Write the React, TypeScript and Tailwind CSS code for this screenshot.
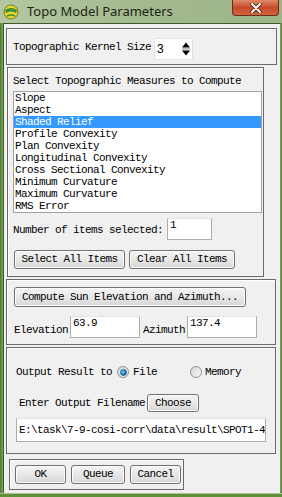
import React from 'react';

const mono = { fontFamily: '"Liberation Mono", "DejaVu Sans Mono", monospace' };

const measures = [
  'Slope',
  'Aspect',
  'Shaded Relief',
  'Profile Convexity',
  'Plan Convexity',
  'Longitudinal Convexity',
  'Cross Sectional Convexity',
  'Minimum Curvature',
  'Maximum Curvature',
  'RMS Error',
];

const Btn: React.FC<{ label: string; className?: string }> = ({ label, className }) => (
  <div
    className={`flex items-center justify-center rounded-[3px] border border-[#707070] bg-gradient-to-b from-[#f4f4f4] via-[#e8e8e8] to-[#d6d6d6] shadow-[inset_0_0_0_1px_#fcfcfc] text-[11px] tracking-[-0.6px] text-black ${className ?? ''}`}
  >
    {label}
  </div>
);

const Field: React.FC<{ value: string; className?: string }> = ({ value, className }) => (
  <div
    className={`border border-[#abadb3] border-t-[#e3e3e3] bg-white pl-[2px] leading-[12px] text-[11px] tracking-[-0.6px] text-black ${className ?? ''}`}
  >
    {value}
  </div>
);

const Radio: React.FC<{ on?: boolean }> = ({ on }) => (
  <div className="flex h-[12px] w-[12px] items-center justify-center rounded-full border border-[#8e8f8f] bg-gradient-to-br from-[#d4d4d4] to-[#f8f8f8]">
    {on && (
      <div className="h-[7px] w-[7px] rounded-full bg-[radial-gradient(circle_at_35%_35%,#6fd0ff,#0d6fb8_70%)] border border-[#1c5a8c]" />
    )}
  </div>
);

const Box: React.FC<{ className?: string; children: React.ReactNode }> = ({ className, children }) => (
  <div className={`border border-[#6a6a6a] shadow-[inset_1px_1px_0_#ffffff] ${className ?? ''}`}>{children}</div>
);

export default function App() {
  return (
    <div className="relative h-[497px] w-[282px] overflow-hidden bg-[#9cb486]" style={mono}>
      {/* title bar */}
      <div className="flex h-[23px] items-center bg-gradient-to-r from-[#b4c7a2] via-[#a3b98e] to-[#9db587]">
        <svg width="16" height="16" viewBox="0 0 16 16" className="ml-[3px] mt-[1px]">
          <circle cx="8" cy="8" r="7" fill="#e9d52a" stroke="#6f7d2a" strokeWidth="1" />
          <path d="M2 6 Q8 2 14 6 L13 9 Q8 6 3 9 Z" fill="#3c8f3a" />
          <path d="M4 12 Q8 10 12 12" stroke="#3c8f3a" strokeWidth="1.5" fill="none" />
        </svg>
        <span
          className="ml-[8px] text-[13px] text-[#1b2614]"
          style={{ fontFamily: '"Noto Sans", "Open Sans", sans-serif' }}
        >
          Topo Model Parameters
        </span>
        <div className="absolute right-[3px] top-0 flex h-[16px] w-[47px] items-center justify-center rounded-b-[4px] border border-t-0 border-[#6b2a1a] bg-gradient-to-b from-[#e08a6a] via-[#c8492a] to-[#d2643d]">
          <svg width="12" height="10" viewBox="0 0 12 10">
            <path d="M2 1 L10 9 M10 1 L2 9" stroke="#3a1a12" strokeWidth="3.4" strokeLinecap="round" />
            <path d="M2 1 L10 9 M10 1 L2 9" stroke="#ffffff" strokeWidth="2" strokeLinecap="round" />
          </svg>
        </div>
      </div>

      {/* client area */}
      <div className="ml-[3px] mr-[2px] h-[471px] border-l border-t border-[#3d5a2a] bg-[#f0f0f0] pl-[2px] pt-[4px] text-[11px] tracking-[-0.6px] text-black">
        {/* kernel size */}
        <Box className="flex h-[37px] w-[271px] items-center pl-[6px]">
          <span className="mt-[1px]">Topographic Kernel Size</span>
          <div className="relative ml-[3px] mt-[4px] h-[22px] w-[39px] border border-[#e3e3e3] bg-white">
            <span className="absolute left-[2px] top-[1px] text-[12px]" style={{ fontFamily: '"Liberation Sans", sans-serif' }}>3</span>
            <svg width="10" height="16" viewBox="0 0 10 16" className="absolute right-[1px] top-[2px]">
              <path d="M1 6.5 L5 1.5 L9 6.5 Z" fill="#000" />
              <path d="M1 9.5 L5 14.5 L9 9.5 Z" fill="#000" />
              <line x1="1" y1="8" x2="9" y2="8" stroke="#888" strokeWidth="1" />
            </svg>
          </div>
        </Box>

        {/* measures */}
        <Box className="mt-[2px] ml-[1px] flex h-[210px] w-[257px] flex-col pl-[5px] pt-[7px]">
          <div className="leading-[12px]">Select Topographic Measures to Compute</div>
          <div className="mt-[4px] h-[122px] w-[249px] border border-[#9ea2aa] bg-white">
            {measures.map((m) => (
              <div
                key={m}
                className={`h-[12px] pl-[1px] leading-[12px] ${m === 'Shaded Relief' ? 'bg-[#3399ff] text-white' : ''}`}
              >
                {m}
              </div>
            ))}
          </div>
          <div className="mt-[5px] flex items-center">
            <span className="mt-[2px]">Number of items selected:</span>
            <Field value="1" className="ml-[4px] h-[22px] w-[45px]" />
          </div>
          <div className="mt-[10px] flex gap-[4px] pl-[1px]">
            <Btn label="Select All Items" className="h-[19px] w-[111px]" />
            <Btn label="Clear All Items" className="h-[19px] w-[106px]" />
          </div>
        </Box>

        {/* sun */}
        <Box className="mt-[2px] flex h-[66px] w-[270px] flex-col pl-[7px] pt-[7px]">
          <Btn label="Compute Sun Elevation and Azimuth..." className="h-[20px] w-[232px]" />
          <div className="mt-[8px] flex items-center">
            <span className="mt-[7px]">Elevation</span>
            <Field value="63.9" className="ml-[2px] h-[22px] w-[70px]" />
            <span className="ml-[3px] mt-[7px]">Azimuth</span>
            <Field value="137.4" className="ml-[2px] h-[22px] w-[70px]" />
          </div>
        </Box>

        {/* output */}
        <Box className="mt-[2px] flex h-[107px] w-[270px] flex-col pl-[9px] pt-[17px]">
          <div className="flex h-[14px] items-center">
            <span>Output Result to</span>
            <div className="ml-[5px]"><Radio on /></div>
            <span className="ml-[4px]">File</span>
            <div className="ml-[33px]"><Radio /></div>
            <span className="ml-[3px]">Memory</span>
          </div>
          <div className="mt-[15px] flex items-center pl-[3px]">
            <span>Enter Output Filename</span>
            <Btn label="Choose" className="ml-[2px] h-[18px] w-[52px]" />
          </div>
          <Field
            value="E:\task\7-9-cosi-corr\data\result\SPOT1-4"
            className="mt-[6px] flex h-[24px] w-[250px] items-center overflow-hidden whitespace-nowrap"
          />
        </Box>

        {/* actions */}
        <Box className="ml-[3px] mt-[5px] flex h-[31px] w-[175px] items-center gap-[5px] pl-[5px]">
          <Btn label="OK" className="h-[19px] w-[51px]" />
          <Btn label="Queue" className="h-[19px] w-[54px]" />
          <Btn label="Cancel" className="h-[19px] w-[51px]" />
        </Box>
      </div>
      <div className="absolute bottom-0 left-0 h-[4px] w-full border-t border-[#a9c58f] bg-[#5f8f39]" />
      <div className="absolute left-0 top-[23px] h-[470px] w-[3px] bg-gradient-to-r from-[#4e7a2c] to-[#7ea862]" />
      <div className="absolute right-0 top-[23px] h-[470px] w-[2px] bg-gradient-to-r from-[#7ea862] to-[#4e7a2c]" />
    </div>
  );
}
